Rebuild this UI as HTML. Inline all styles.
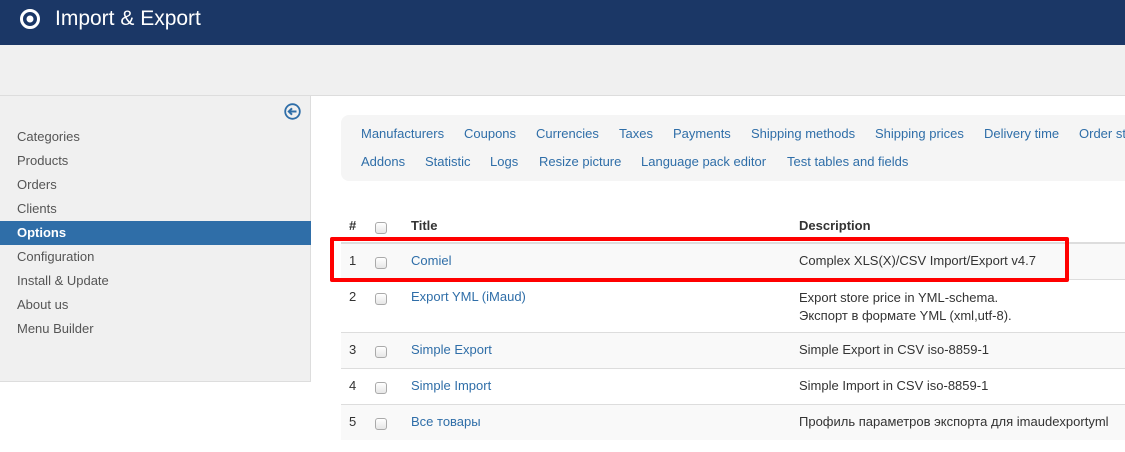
<!DOCTYPE html>
<html><head><meta charset="utf-8"><style>
*{margin:0;padding:0;box-sizing:border-box}
body{width:1125px;height:452px;overflow:hidden;background:#fff;font-family:"Liberation Sans",Arial,sans-serif;font-size:13px;color:#333;position:relative}
.a{position:absolute;white-space:nowrap}
.hd{left:0;top:0;width:1125px;height:45px;background:#1b3766}
.band{left:0;top:45px;width:1125px;height:51px;background:#f0f0f0;border-bottom:1px solid #ddd}
.side{left:0;top:96px;width:311px;height:286px;background:#f0f0f0;border-right:1px solid #ddd;border-bottom:1px solid #ddd}
.si{left:17px;color:#555;font-size:13px}
.nav{left:341px;top:115px;width:800px;height:66px;background:#f5f5f5;border-radius:8px}
.nl{color:#2f6ea8;font-size:13px}
.row{left:341px;width:800px;border-top:1px solid #ddd}
.cb{width:12px;height:12px;border:1px solid #aaa;border-radius:3px;background:linear-gradient(#fff,#e6e6e6);left:375px}
.ln{color:#2f6ea8;left:411px}
.ds{left:799px}
.n{left:349px}
</style></head><body>
<div class="a hd"></div>
<svg class="a" style="left:19px;top:8px" width="22" height="22" viewBox="0 0 22 22"><circle cx="11" cy="11" r="8.5" fill="none" stroke="#fff" stroke-width="3"/><circle cx="11" cy="11" r="3.5" fill="#fff"/></svg>
<div class="a" style="left:55px;top:7px;color:#fff;font-size:21px">Import &amp; Export</div>
<div class="a band"></div>
<div class="a side"></div>
<svg class="a" style="left:284px;top:103px" width="17" height="17" viewBox="0 0 17 17"><circle cx="8.5" cy="8.5" r="7.3" fill="none" stroke="#2f6ea8" stroke-width="1.8"/><path d="M12.5 8.5H5M8 5.3L4.8 8.5 8 11.7" fill="none" stroke="#2f6ea8" stroke-width="2"/></svg>
<div class="a si" style="top:129px">Categories</div>
<div class="a si" style="top:153px">Products</div>
<div class="a si" style="top:177px">Orders</div>
<div class="a si" style="top:201px">Clients</div>
<div class="a" style="left:0;top:221px;width:311px;height:24px;background:#2f6ea8"></div>
<div class="a si" style="top:225px;color:#fff;font-weight:bold">Options</div>
<div class="a si" style="top:249px">Configuration</div>
<div class="a si" style="top:273px">Install &amp; Update</div>
<div class="a si" style="top:297px">About us</div>
<div class="a si" style="top:321px">Menu Builder</div>
<div class="a nav"></div>
<div class="a nl" style="left:361px;top:126px">Manufacturers</div>
<div class="a nl" style="left:464px;top:126px">Coupons</div>
<div class="a nl" style="left:536px;top:126px">Currencies</div>
<div class="a nl" style="left:619px;top:126px">Taxes</div>
<div class="a nl" style="left:673px;top:126px">Payments</div>
<div class="a nl" style="left:751px;top:126px">Shipping methods</div>
<div class="a nl" style="left:875px;top:126px">Shipping prices</div>
<div class="a nl" style="left:984px;top:126px">Delivery time</div>
<div class="a nl" style="left:1079px;top:126px">Order status</div>
<div class="a nl" style="left:361px;top:154px">Addons</div>
<div class="a nl" style="left:425px;top:154px">Statistic</div>
<div class="a nl" style="left:490px;top:154px">Logs</div>
<div class="a nl" style="left:539px;top:154px">Resize picture</div>
<div class="a nl" style="left:641px;top:154px">Language pack editor</div>
<div class="a nl" style="left:787px;top:154px">Test tables and fields</div>

<div class="a n" style="top:218px;font-weight:bold">#</div>
<div class="a cb" style="top:222px"></div>
<div class="a" style="left:411px;top:218px;font-weight:bold">Title</div>
<div class="a" style="left:799px;top:218px;font-weight:bold">Description</div>

<div class="a row" style="top:242px;height:37px;background:#f9f9f9;border-top:2px solid #ddd"></div>
<div class="a row" style="top:279px;height:53px"></div>
<div class="a row" style="top:332px;height:36px;background:#f9f9f9"></div>
<div class="a row" style="top:368px;height:36px"></div>
<div class="a row" style="top:404px;height:36px;background:#f9f9f9"></div>

<div class="a n" style="top:253px">1</div><div class="a cb" style="top:257px"></div><div class="a ln" style="top:253px">Comiel</div><div class="a ds" style="top:253px">Complex XLS(X)/CSV Import/Export v4.7</div>
<div class="a n" style="top:289px">2</div><div class="a cb" style="top:293px"></div><div class="a ln" style="top:289px">Export YML (iMaud)</div><div class="a ds" style="top:289px;line-height:18px">Export store price in YML-schema.<br>Экспорт в формате YML (xml,utf-8).</div>
<div class="a n" style="top:342px">3</div><div class="a cb" style="top:346px"></div><div class="a ln" style="top:342px">Simple Export</div><div class="a ds" style="top:342px">Simple Export in CSV iso-8859-1</div>
<div class="a n" style="top:378px">4</div><div class="a cb" style="top:382px"></div><div class="a ln" style="top:378px">Simple Import</div><div class="a ds" style="top:378px">Simple Import in CSV iso-8859-1</div>
<div class="a n" style="top:414px">5</div><div class="a cb" style="top:418px"></div><div class="a ln" style="top:414px">Все товары</div><div class="a ds" style="top:414px">Профиль параметров экспорта для imaudexportyml</div>

<div class="a" style="left:330px;top:237px;width:739px;height:45px;border:4px solid #f00;border-radius:2px"></div>
</body></html>
